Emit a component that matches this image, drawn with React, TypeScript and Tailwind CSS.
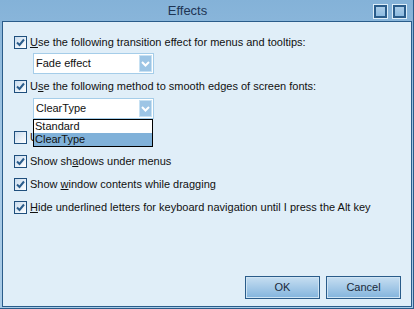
const font = 'font-["Liberation_Sans",Arial,sans-serif]';

const Check = ({ checked }: { checked: boolean }) => (
  <div className="w-[13px] h-[13px] shrink-0 border border-[#1f4f7d] bg-gradient-to-br from-[#c9dcee] to-white flex items-center justify-center">
    {checked && (
      <svg width="9" height="9" viewBox="0 0 9 9">
        <path d="M1 4.5 L3.5 7 L8 1.5" fill="none" stroke="#2b5d8c" strokeWidth="2" />
      </svg>
    )}
  </div>
);

const Row = ({
  checked,
  before,
  key1,
  after,
  className = '',
}: {
  checked: boolean;
  before: string;
  key1: string;
  after: string;
  className?: string;
}) => (
  <div className={`flex items-center gap-[3px] h-[13px] ${className}`}>
    <Check checked={checked} />
    <span className="text-[11px] leading-[13px] text-[#111] whitespace-nowrap">
      {before}
      <span className="underline underline-offset-[1px]">{key1}</span>
      {after}
    </span>
  </div>
);

const Select = ({ value }: { value: string }) => (
  <div className="ml-[19px] w-[121px] h-[21px] border border-[#a5cde9] bg-white flex items-center justify-between pl-[2px] pr-[1px]">
    <span className="text-[11px] text-[#111]">{value}</span>
    <div className="w-[13px] h-[17px] border border-[#c7e1f3] bg-[#9dc5e5] flex items-center justify-center">
      <svg width="9" height="6" viewBox="0 0 9 6">
        <path d="M1 1 L4.5 4.5 L8 1" fill="none" stroke="white" strokeWidth="2" />
      </svg>
    </div>
  </div>
);

const Btn = ({ label }: { label: string }) => (
  <button className="w-[75px] h-[23px] border border-[#2a5c8a] p-0 bg-[#dcebf7]">
    <div className="w-full h-full border border-[#cfe4f4] bg-gradient-to-b from-[#c3dcf0] to-[#86b6de] flex items-center justify-center text-[11px] text-[#1a2a3a]">
      {label}
    </div>
  </button>
);

const TitleBtn = () => (
  <div className="w-[15px] h-[15px] border border-[#dceef9] bg-[#2a5c8a] p-[1px]">
    <div className="w-full h-full border border-[#2a5c8a] bg-gradient-to-b from-[#a9cce8] to-[#8dbbe0]" />
  </div>
);

export default function App() {
  return (
    <div className={`w-[414px] h-[309px] flex flex-col bg-gradient-to-b from-[#84b2d8] via-[#a6c9e6] to-[#a9cbe7] border-r border-b border-[#2a5c8a] ${font}`}>
      <div className="h-[21px] flex items-center shrink-0">
        <div className="flex-1 text-center text-[13px] text-[#1e3554] pl-[2px]">Effects</div>
        <div className="flex gap-[4px] pr-[6px] pt-[1px]">
          <TitleBtn />
          <TitleBtn />
        </div>
      </div>
      <div className="flex-1 ml-[2px] mr-[1px] mb-[1px] border border-[#2a5c8a] bg-[#e0eef8] flex flex-col pl-[11px] pr-[10px] pb-[7px] relative">
        <Row className="mt-[14px]" checked before="" key1="U" after="se the following transition effect for menus and tooltips:" />
        <div className="mt-[4px]">
          <Select value="Fade effect" />
        </div>
        <Row className="mt-[6px]" checked before="U" key1="s" after="e the following method to smooth edges of screen fonts:" />
        <div className="mt-[5px] relative">
          <Select value="ClearType" />
          <div className="absolute left-[19px] top-[21px] w-[120px] border border-black bg-white z-10 text-[11px] text-[#111]">
            <div className="h-[13px] leading-[13px] pl-[1px]">Standard</div>
            <div className="h-[13px] leading-[13px] pl-[1px] bg-[#80b1d9]">ClearType</div>
          </div>
        </div>
        <Row className="mt-[12px]" checked={false} before="Use " key1="l" after="arge icons" />
        <Row className="mt-[11px]" checked before="Show sh" key1="a" after="dows under menus" />
        <Row className="mt-[10px]" checked before="Show " key1="w" after="indow contents while dragging" />
        <Row className="mt-[10px]" checked before="" key1="H" after="ide underlined letters for keyboard navigation until I press the Alt key" />
        <div className="mt-auto flex justify-end gap-[6px]">
          <Btn label="OK" />
          <Btn label="Cancel" />
        </div>
      </div>
    </div>
  );
}
